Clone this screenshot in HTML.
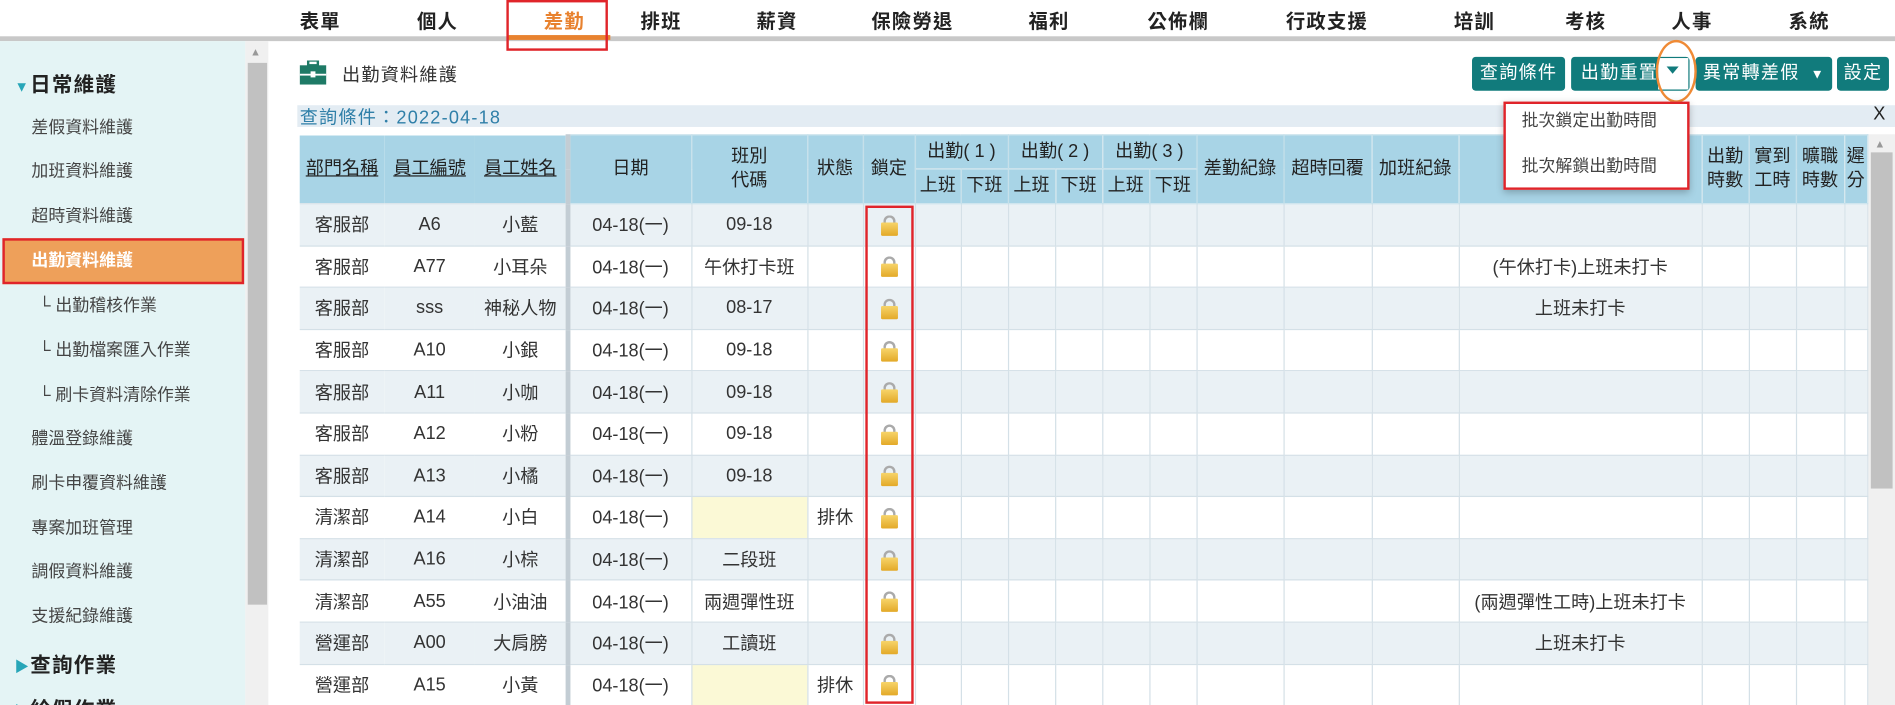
<!DOCTYPE html>
<html><head><meta charset="utf-8">
<style>
html,body{margin:0;padding:0;width:1895px;height:705px;overflow:hidden;background:#fff}
#w{position:absolute;left:0;top:0;width:1568px;height:583px;transform:scale(1.20855,1.2093);transform-origin:0 0;font-family:"Liberation Sans","Noto Sans CJK TC",sans-serif;color:#333;overflow:hidden}
.a{position:absolute}
.nav{top:4px;font-size:16px;color:#222;font-weight:bold;transform:translateX(-50%);letter-spacing:1px}
.side{left:0;top:34px;width:203px;height:549px;background:#e4f4f5}
.si{position:absolute;left:26px;font-size:14px;color:#444;transform:translateY(-50%)}
.grp{position:absolute;left:12px;font-size:17px;color:#222;font-weight:bold;transform:translateY(-50%);letter-spacing:1px}
.btn{position:absolute;top:47px;height:28px;background:#117b7c;color:#fff;border-radius:3px;font-size:15px;line-height:28px;text-align:center;letter-spacing:1px}
table{position:absolute;left:248px;top:111px;border-collapse:collapse;table-layout:fixed;font-size:15px}
td,th{padding:0;text-align:center;white-space:nowrap;overflow:hidden;border:1px solid #d4e0e7}
td.n{border-left:none;border-right:none}
th{background:#a8d4e6;font-weight:normal;color:#222;border-color:#c6e0ea;line-height:20px}
th.u{text-decoration:underline;border:none}
tr.r{height:34.6px}
tr.r:nth-child(odd) td{background:#eaf1f5}
tr.r:nth-child(even) td{background:#fff}
.sep{border-left:4px solid #c3cdd4 !important}
.y{background:#fbf9d6 !important}
.lk{display:inline-block;position:relative;width:16px;height:18px;vertical-align:middle}
.lk:before{content:"";position:absolute;left:3px;top:1px;width:6px;height:7px;border:2px solid #aaa;border-bottom:none;border-radius:5px 5px 0 0}
.lk:after{content:"";position:absolute;left:1px;top:7px;width:14px;height:11px;background:linear-gradient(#f7d46a,#e3a928);border-radius:1px}
</style></head><body><div id="w">
<div class="a" style="left:0;top:30px;width:1568px;height:4px;background:#c8c8c8"></div>
<div class="a nav" style="left:265px">表單</div>
<div class="a nav" style="left:362px">個人</div>
<div class="a nav" style="left:467px;color:#e8822f">差勤</div>
<div class="a" style="left:420px;top:29px;width:85px;height:4px;background:#e8822f"></div>
<div class="a" style="left:419px;top:0;width:84px;height:42px;border:2px solid #e0242a;box-sizing:border-box"></div>
<div class="a nav" style="left:547px">排班</div>
<div class="a nav" style="left:643px">薪資</div>
<div class="a nav" style="left:755px">保險勞退</div>
<div class="a nav" style="left:868px">福利</div>
<div class="a nav" style="left:975px">公佈欄</div>
<div class="a nav" style="left:1098px">行政支援</div>
<div class="a nav" style="left:1220px">培訓</div>
<div class="a nav" style="left:1312px">考核</div>
<div class="a nav" style="left:1400px">人事</div>
<div class="a nav" style="left:1497px">系統</div>

<div class="a side">
<div class="grp" style="top:34px"><span style="color:#27a6b8;font-size:12px">▼</span>日常維護</div>
<div class="si" style="top:71px">差假資料維護</div>
<div class="si" style="top:107px">加班資料維護</div>
<div class="si" style="top:144px">超時資料維護</div>
<div class="a" style="left:2px;top:163px;width:196px;height:34px;background:#eea05a;border:2px solid #e0242a"></div>
<div class="si" style="top:181px;color:#fff;font-weight:bold">出勤資料維護</div>
<div class="si" style="top:218px;left:32px">└ 出勤稽核作業</div>
<div class="si" style="top:255px;left:32px">└ 出勤檔案匯入作業</div>
<div class="si" style="top:292px;left:32px">└ 刷卡資料清除作業</div>
<div class="si" style="top:328px">體溫登錄維護</div>
<div class="si" style="top:365px">刷卡申覆資料維護</div>
<div class="si" style="top:402px">專案加班管理</div>
<div class="si" style="top:438px">調假資料維護</div>
<div class="si" style="top:475px">支援紀錄維護</div>
<div class="grp" style="top:514px"><span style="color:#27a6b8;font-size:12px">▶</span>查詢作業</div>
<div class="grp" style="top:551px"><span style="color:#27a6b8;font-size:12px">▶</span>給假作業</div>
</div>
<div class="a" style="left:203px;top:34px;width:19px;height:549px;background:#f0f0f0"></div>
<div class="a" style="left:205px;top:52px;width:16px;height:448px;background:#c1c1c1"></div>
<div class="a" style="left:207px;top:38px;font-size:9px;color:#999">▲</div>

<svg class="a" style="left:248px;top:50px" width="22" height="20" viewBox="0 0 22 20"><rect x="7" y="0" width="8" height="4" fill="none" stroke="#1e7a66" stroke-width="2"/><rect x="0" y="4" width="22" height="16" fill="#1e7a66"/><rect x="0" y="11" width="22" height="1.5" fill="#fff"/><rect x="9" y="9" width="4" height="5" fill="#fff"/></svg>
<div class="a" style="left:283px;top:51px;font-size:15px;color:#333;letter-spacing:1px">出勤資料維護</div>

<div class="btn" style="left:1218px;width:77px">查詢條件</div>
<div class="btn" style="left:1300px;width:98px;text-align:left;padding-left:8px;box-sizing:border-box">出勤重置</div>
<div class="a" style="left:1372px;top:48px;width:25px;height:26px;background:#fff"></div>
<div class="a" style="left:1379px;top:55px;width:0;height:0;border:5px solid transparent;border-top:6px solid #117b7c"></div>
<div class="btn" style="left:1403px;width:113px;text-align:left;padding-left:6px;box-sizing:border-box">異常轉差假 <span style="font-size:11px;margin-left:4px">▼</span></div>
<div class="btn" style="left:1520px;width:43px">設定</div>
<div class="a" style="left:1370px;top:33px;width:30px;height:48px;border:2px solid #ef8a35;border-radius:50%"></div>

<div class="a" style="left:246px;top:87px;width:1322px;height:18px;background:#e3ecf3"></div>
<div class="a" style="left:248px;top:86px;font-size:15px;color:#2f7fa8;letter-spacing:1px">查詢條件：2022-04-18</div>
<div class="a" style="left:1550px;top:86px;font-size:15px;color:#222">X</div>

<table>
<colgroup><col style="width:70px"><col style="width:75px"><col style="width:77px"><col style="width:102px"><col style="width:96px"><col style="width:46px"><col style="width:43px"><col style="width:38px"><col style="width:39px"><col style="width:39px"><col style="width:39px"><col style="width:39px"><col style="width:39px"><col style="width:72px"><col style="width:73px"><col style="width:72px"><col style="width:201px"><col style="width:39px"><col style="width:39px"><col style="width:40px"><col style="width:19px"></colgroup>
<tr style="height:28px"><th rowspan="2" class="u">部門名稱</th><th rowspan="2" class="u">員工編號</th><th rowspan="2" class="u">員工姓名</th><th rowspan="2" class="sep">日期</th><th rowspan="2">班別<br>代碼</th><th rowspan="2">狀態</th><th rowspan="2">鎖定</th><th colspan="2">出勤( 1 )</th><th colspan="2">出勤( 2 )</th><th colspan="2">出勤( 3 )</th><th rowspan="2">差勤紀錄</th><th rowspan="2">超時回覆</th><th rowspan="2">加班紀錄</th><th rowspan="2"></th><th rowspan="2">出勤<br>時數</th><th rowspan="2">實到<br>工時</th><th rowspan="2">曠職<br>時數</th><th rowspan="2">遲<br>分</th></tr>
<tr style="height:29px"><th>上班</th><th>下班</th><th>上班</th><th>下班</th><th>上班</th><th>下班</th></tr>
<tr class="r"><td class="n">客服部</td><td class="n">A6</td><td class="n">小藍</td><td class="sep">04-18(一)</td><td>09-18</td><td></td><td><span class="lk"></span></td><td></td><td></td><td></td><td></td><td></td><td></td><td></td><td></td><td></td><td></td><td></td><td></td><td></td><td></td></tr>
<tr class="r"><td class="n">客服部</td><td class="n">A77</td><td class="n">小耳朵</td><td class="sep">04-18(一)</td><td>午休打卡班</td><td></td><td><span class="lk"></span></td><td></td><td></td><td></td><td></td><td></td><td></td><td></td><td></td><td></td><td>(午休打卡)上班未打卡</td><td></td><td></td><td></td><td></td></tr>
<tr class="r"><td class="n">客服部</td><td class="n">sss</td><td class="n">神秘人物</td><td class="sep">04-18(一)</td><td>08-17</td><td></td><td><span class="lk"></span></td><td></td><td></td><td></td><td></td><td></td><td></td><td></td><td></td><td></td><td>上班未打卡</td><td></td><td></td><td></td><td></td></tr>
<tr class="r"><td class="n">客服部</td><td class="n">A10</td><td class="n">小銀</td><td class="sep">04-18(一)</td><td>09-18</td><td></td><td><span class="lk"></span></td><td></td><td></td><td></td><td></td><td></td><td></td><td></td><td></td><td></td><td></td><td></td><td></td><td></td><td></td></tr>
<tr class="r"><td class="n">客服部</td><td class="n">A11</td><td class="n">小咖</td><td class="sep">04-18(一)</td><td>09-18</td><td></td><td><span class="lk"></span></td><td></td><td></td><td></td><td></td><td></td><td></td><td></td><td></td><td></td><td></td><td></td><td></td><td></td><td></td></tr>
<tr class="r"><td class="n">客服部</td><td class="n">A12</td><td class="n">小粉</td><td class="sep">04-18(一)</td><td>09-18</td><td></td><td><span class="lk"></span></td><td></td><td></td><td></td><td></td><td></td><td></td><td></td><td></td><td></td><td></td><td></td><td></td><td></td><td></td></tr>
<tr class="r"><td class="n">客服部</td><td class="n">A13</td><td class="n">小橘</td><td class="sep">04-18(一)</td><td>09-18</td><td></td><td><span class="lk"></span></td><td></td><td></td><td></td><td></td><td></td><td></td><td></td><td></td><td></td><td></td><td></td><td></td><td></td><td></td></tr>
<tr class="r"><td class="n">清潔部</td><td class="n">A14</td><td class="n">小白</td><td class="sep">04-18(一)</td><td class="y"></td><td>排休</td><td><span class="lk"></span></td><td></td><td></td><td></td><td></td><td></td><td></td><td></td><td></td><td></td><td></td><td></td><td></td><td></td><td></td></tr>
<tr class="r"><td class="n">清潔部</td><td class="n">A16</td><td class="n">小棕</td><td class="sep">04-18(一)</td><td>二段班</td><td></td><td><span class="lk"></span></td><td></td><td></td><td></td><td></td><td></td><td></td><td></td><td></td><td></td><td></td><td></td><td></td><td></td><td></td></tr>
<tr class="r"><td class="n">清潔部</td><td class="n">A55</td><td class="n">小油油</td><td class="sep">04-18(一)</td><td>兩週彈性班</td><td></td><td><span class="lk"></span></td><td></td><td></td><td></td><td></td><td></td><td></td><td></td><td></td><td></td><td>(兩週彈性工時)上班未打卡</td><td></td><td></td><td></td><td></td></tr>
<tr class="r"><td class="n">營運部</td><td class="n">A00</td><td class="n">大肩膀</td><td class="sep">04-18(一)</td><td>工讀班</td><td></td><td><span class="lk"></span></td><td></td><td></td><td></td><td></td><td></td><td></td><td></td><td></td><td></td><td>上班未打卡</td><td></td><td></td><td></td><td></td></tr>
<tr class="r"><td class="n">營運部</td><td class="n">A15</td><td class="n">小黃</td><td class="sep">04-18(一)</td><td class="y"></td><td>排休</td><td><span class="lk"></span></td><td></td><td></td><td></td><td></td><td></td><td></td><td></td><td></td><td></td><td></td><td></td><td></td><td></td><td></td></tr>
</table>
<div class="a" style="left:716px;top:170px;width:40px;height:412px;border:2px solid #e0242a;box-sizing:border-box"></div>

<div class="a" style="left:1546px;top:111px;width:22px;height:472px;background:#f0f0f0"></div>
<div class="a" style="left:1548px;top:126px;width:18px;height:278px;background:#c1c1c1"></div>
<div class="a" style="left:1551px;top:114px;font-size:9px;color:#999">▲</div>

<div class="a" style="left:1244px;top:84px;width:154px;height:73px;background:#fff;box-shadow:0 2px 6px rgba(0,0,0,.25);border:2px solid #e0242a;box-sizing:border-box"></div>
<div class="a" style="left:1259px;top:89px;font-size:14px;color:#444">批次鎖定出勤時間</div>
<div class="a" style="left:1259px;top:127px;font-size:14px;color:#444">批次解鎖出勤時間</div>
</div></body></html>
